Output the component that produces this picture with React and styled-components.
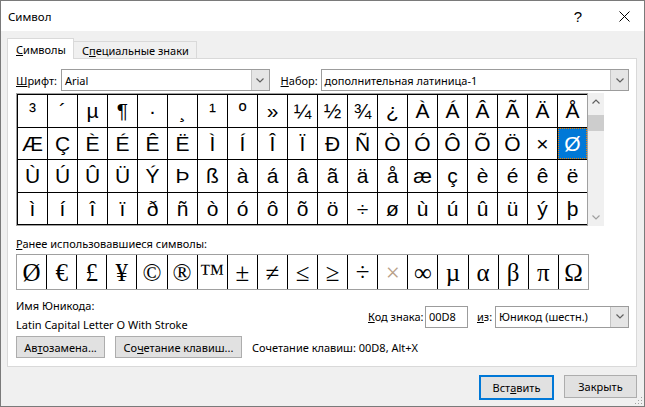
import React from 'react'
import styled, { createGlobalStyle } from 'styled-components'

const GlobalStyle = createGlobalStyle`
  body {
    margin: 0;
    background: #ffffff;
    font-family: "Noto Sans", "Liberation Sans", sans-serif;
  }
`;

const UI_FONT = `"Noto Sans", "Liberation Sans", sans-serif`;

// chars U+00B3 .. U+00FE
const gridChars = Array.from({ length: 76 }, (_, i) => String.fromCharCode(0xb3 + i));
const recentChars = ['Ø', '€', '£', '¥', '©', '®', '™', '±', '≠', '≤', '≥', '÷', '×', '∞', 'µ', 'α', 'β', 'π', 'Ω'];

const Window = styled.div`
  width: 645px;
  height: 407px;
  box-sizing: border-box;
  border: 1px solid #7a7a7a;
  background: #f0f0f0;
  display: flex;
  flex-direction: column;
  position: relative;
  font-family: ${UI_FONT};
  font-size: 11px;
  color: #000;
`;

const TitleBar = styled.div`
  height: 30px;
  background: #fff;
  display: flex;
  align-items: center;
  padding-left: 7px;
`;

const TitleText = styled.div`
  flex: 1;
  font-size: 11.5px;
`;

const TitleButton = styled.div`
  width: ${(p) => p.w}px;
  height: 30px;
  display: flex;
  align-items: center;
  justify-content: center;
  font-size: 15px;
  font-family: "Liberation Sans", sans-serif;
`;

const Body = styled.div`
  flex: 1;
  padding: 7px 7px 0 6px;
  display: flex;
  flex-direction: column;
`;

const Tabs = styled.div`
  display: flex;
  align-items: flex-end;
  height: 21px;
  margin-bottom: -1px;
  position: relative;
  z-index: 1;
`;

const Tab = styled.div`
  box-sizing: border-box;
  width: ${(p) => p.w}px;
  height: ${(p) => (p.active ? 21 : 18)}px;
  background: ${(p) => (p.active ? '#fff' : '#f0f0f0')};
  border: 1px solid #d9d9d9;
  border-bottom: ${(p) => (p.active ? 'none' : '1px solid #d9d9d9')};
  border-left: ${(p) => (p.active ? '1px solid #d9d9d9' : 'none')};
  display: flex;
  align-items: center;
  padding-left: 8px;
  padding-top: ${(p) => (p.active ? 0 : 1)}px;
`;

const Panel = styled.div`
  box-sizing: border-box;
  height: 309px;
  background: #fff;
  border: 1px solid #d9d9d9;
  padding: 10px 7px 0 8px;
  display: flex;
  flex-direction: column;
`;

const FontRow = styled.div`
  display: flex;
  align-items: center;
  height: 22px;
`;

const Label = styled.div`
  width: ${(p) => p.w}px;
  margin-left: ${(p) => p.ml || 0}px;
  white-space: nowrap;
`;

const Combo = styled.div`
  box-sizing: border-box;
  width: ${(p) => p.w}px;
  height: 22px;
  border: 1px solid #9c9c9c;
  background: #fff;
  display: flex;
  align-items: stretch;
`;

const ComboText = styled.div`
  flex: 1;
  padding-left: 3px;
  display: flex;
  align-items: center;
  white-space: nowrap;
  overflow: hidden;
`;

const ComboArrow = styled.div`
  width: 17px;
  background: #e5e5e5;
  border-left: 1px solid #c4c4c4;
  display: flex;
  align-items: center;
  justify-content: center;
`;

const GridRow = styled.div`
  display: flex;
  margin-top: 2px;
`;

const CharGrid = styled.div`
  box-sizing: border-box;
  width: 572px;
  height: 133px;
  border: 1px solid #a0a0a0;
  padding: 1px 0 1px 1px;
  background: #000;
  display: grid;
  grid-template-columns: repeat(19, 1fr);
  grid-template-rows: repeat(4, 1fr);
  gap: 1px;
`;

const Cell = styled.div`
  background: ${(p) => (p.selected ? '#0078d7' : '#fff')};
  color: ${(p) => (p.selected ? '#fff' : '#000')};
  outline: ${(p) => (p.selected ? '1px dotted #f08000' : 'none')};
  outline-offset: -1px;
  display: flex;
  align-items: center;
  justify-content: center;
  font-family: "Liberation Sans", Arial, sans-serif;
  font-size: 21px;
  line-height: 1;
`;

const Scrollbar = styled.div`
  width: 16px;
  height: 133px;
  background: #f0f0f0;
  display: flex;
  flex-direction: column;
`;

const ScrollArrow = styled.div`
  height: 17px;
  display: flex;
  align-items: center;
  justify-content: center;
`;

const ScrollTrack = styled.div`
  flex: 1;
  padding-top: 5px;
`;

const Thumb = styled.div`
  height: 16px;
  background: #cdcdcd;
`;

const SectionLabel = styled.div`
  margin-top: 10px;
  height: 16px;
  line-height: 16px;
`;

const RecentGrid = styled.div`
  box-sizing: border-box;
  margin-top: 2px;
  width: 573px;
  height: 36px;
  border: 1px solid #a0a0a0;
  background: #000;
  display: grid;
  grid-template-columns: repeat(19, 1fr);
  gap: 1px;
`;

const RecentCell = styled.div`
  background: #fff;
  color: ${(p) => (p.faded ? '#b8a088' : '#000')};
  display: flex;
  align-items: center;
  justify-content: center;
  font-family: "Liberation Serif", "Times New Roman", serif;
  font-size: 25px;
  line-height: 1;
`;

const InfoRow = styled.div`
  display: flex;
  align-items: center;
  justify-content: space-between;
  margin-top: 6px;
`;

const InfoText = styled.div`
  line-height: 19px;
`;

const CodeGroup = styled.div`
  display: flex;
  align-items: center;
  margin-top: 3px;
`;

const CodeInput = styled.div`
  box-sizing: border-box;
  width: 43px;
  height: 22px;
  border: 1px solid #9c9c9c;
  padding-left: 3px;
  display: flex;
  align-items: center;
  margin: 0 9px 0 0;
`;

const ButtonRow = styled.div`
  display: flex;
  align-items: center;
  gap: 10px;
  margin-top: 2px;
`;

const Button = styled.div`
  box-sizing: border-box;
  width: ${(p) => p.w}px;
  height: ${(p) => p.h || 22}px;
  background: #e1e1e1;
  border: ${(p) => (p.primary ? '2px solid #0078d7' : '1px solid #adadad')};
  display: flex;
  align-items: center;
  justify-content: center;
  white-space: nowrap;
`;

const Footer = styled.div`
  display: flex;
  justify-content: flex-end;
  gap: 10px;
  padding-top: 8px;
`;

const Grip = styled.svg`
  position: absolute;
  right: 1px;
  bottom: 1px;
`;

const Chevron = ({ up, color = '#606060', w = 8 }) => (
  <svg width={w} height="5" viewBox="0 0 8 5">
    <path d={up ? 'M0.5 4.5 L4 1 L7.5 4.5' : 'M0.5 0.5 L4 4 L7.5 0.5'} fill="none" stroke={color} strokeWidth="1.2" />
  </svg>
);

export default function App() {
  return (
    <>
      <GlobalStyle />
      <Window>
        <TitleBar>
          <TitleText>Символ</TitleText>
          <TitleButton w={52}>?</TitleButton>
          <TitleButton w={40}>
            <svg width="11" height="11" viewBox="0 0 11 11">
              <path d="M0.5 0.5 L10.5 10.5 M10.5 0.5 L0.5 10.5" stroke="#000" strokeWidth="1" />
            </svg>
          </TitleButton>
        </TitleBar>
        <Body>
          <Tabs>
            <Tab active w={67}><u>С</u>имволы</Tab>
            <Tab w={123}>С<u>п</u>ециальные знаки</Tab>
          </Tabs>
          <Panel>
            <FontRow>
              <Label w={45}><u>Ш</u>рифт:</Label>
              <Combo w={209}>
                <ComboText>Arial</ComboText>
                <ComboArrow><Chevron /></ComboArrow>
              </Combo>
              <Label w={40} ml={11}><u>Н</u>абор:</Label>
              <Combo w={309}>
                <ComboText>дополнительная латиница-1</ComboText>
                <ComboArrow><Chevron /></ComboArrow>
              </Combo>
            </FontRow>

            <GridRow>
              <CharGrid>
                {gridChars.map((c, i) => (
                  <Cell key={i} selected={c === 'Ø'}>{c}</Cell>
                ))}
              </CharGrid>
              <Scrollbar>
                <ScrollArrow><Chevron up w={8} /></ScrollArrow>
                <ScrollTrack><Thumb /></ScrollTrack>
                <ScrollArrow><Chevron w={8} color="#a0a0a0" /></ScrollArrow>
              </Scrollbar>
            </GridRow>

            <SectionLabel><u>Р</u>анее использовавшиеся символы:</SectionLabel>
            <RecentGrid>
              {recentChars.map((c, i) => (
                <RecentCell key={i} faded={c === '×'}>{c}</RecentCell>
              ))}
            </RecentGrid>

            <InfoRow>
              <div>
                <InfoText>Имя Юникода:</InfoText>
                <InfoText>Latin Capital Letter O With Stroke</InfoText>
              </div>
              <CodeGroup>
                <Label w={57}><u>К</u>од знака:</Label>
                <CodeInput>00D8</CodeInput>
                <Label w={18}><u>и</u>з:</Label>
                <Combo w={134}>
                  <ComboText>Юникод (шестн.)</ComboText>
                  <ComboArrow><Chevron /></ComboArrow>
                </Combo>
              </CodeGroup>
            </InfoRow>

            <ButtonRow>
              <Button w={89}>Ав<u>т</u>озамена...</Button>
              <Button w={127}>Со<u>ч</u>етание клавиш...</Button>
              <span>Сочетание клавиш: 00D8, Alt+X</span>
            </ButtonRow>
          </Panel>
          <Footer>
            <Button w={75} h={25} primary>Вст<u>а</u>вить</Button>
            <Button w={73} h={23}>Закрыть</Button>
          </Footer>
        </Body>
        <Grip width="10" height="10" viewBox="0 0 10 10">
          {[[8, 2], [8, 5], [5, 5], [8, 8], [5, 8], [2, 8]].map(([x, y], i) => (
            <rect key={i} x={x} y={y} width="1" height="1" fill="#a0a0a0" />
          ))}
        </Grip>
      </Window>
    </>
  );
}
